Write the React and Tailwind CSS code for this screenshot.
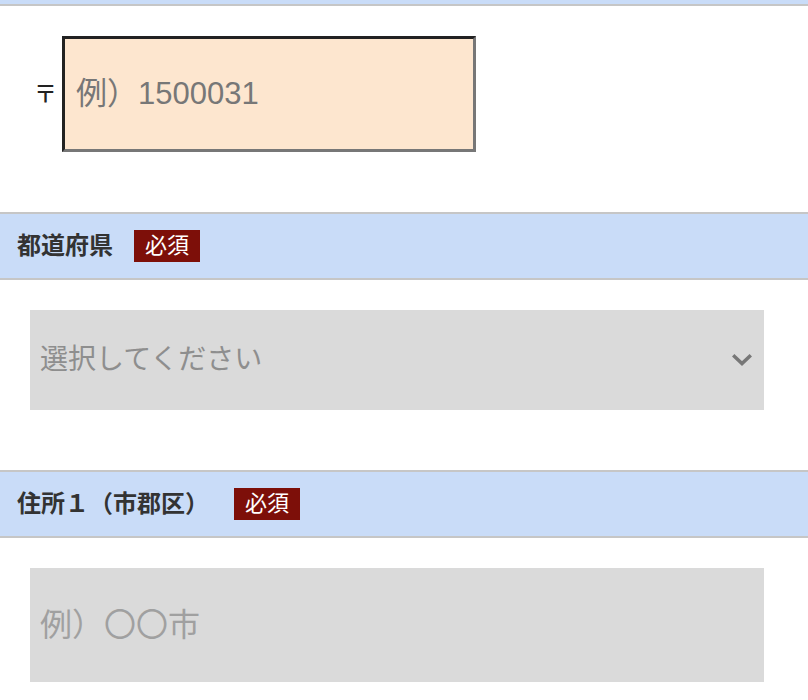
import React from 'react';

const font = { fontFamily: '"Liberation Sans", "Noto Sans CJK JP", sans-serif' };

const SectionHeader = ({ label, gap }) => (
  <div className="flex items-center h-[68px] border-y-2 border-[#c6c6c6] bg-[#c9dcf8] pl-[17px]">
    <span className="text-[24px] font-bold text-[#333]">{label}</span>
    <span className={`${gap} h-[32px] px-[11px] bg-[#7d0f09] text-white text-[22px] leading-[32px]`}>必須</span>
  </div>
);

export default function App() {
  return (
    <div className="w-[808px] bg-white" style={font}>
      {/* bottom edge of the previous header */}
      <div className="h-[6px] bg-[#c9dcf8] border-b-2 border-[#c6c6c6]" />

      <div className="pt-[30px] pb-[60px] pl-[29px] flex items-center">
        <span className="w-[33px] text-center text-[23px] font-medium text-[#222]">〒</span>
        <input
          type="text"
          placeholder="例）1500031"
          className="w-[414px] h-[116px] px-[11px] bg-[#fde6cf] border-[3px] border-t-[#222] border-l-[#222] border-b-[#777] border-r-[#777] text-[31px] placeholder:text-[#777] outline-none"
        />
      </div>

      <SectionHeader label="都道府県" gap="ml-[21px]" />

      <div className="pt-[30px] pb-[60px] pl-[30px]">
        <div className="w-[734px] h-[100px] bg-[#dadada] flex items-center justify-between pl-[10px] pr-[12px]">
          <span className="text-[28px] text-[#8e8e8e]">選択してください</span>
          <svg width="20" height="14" viewBox="0 0 20 14" fill="none">
            <path d="M2.5 3.5 L10 10.5 L17.5 3.5" stroke="#777" strokeWidth="3.5" strokeLinecap="square" />
          </svg>
        </div>
      </div>

      <SectionHeader label="住所１（市郡区）" gap="ml-[25px]" />

      <div className="pt-[30px] pl-[30px] pb-[20px]">
        <input
          type="text"
          placeholder="例）〇〇市"
          className="w-[734px] h-[114px] px-[10px] bg-[#dadada] text-[32px] placeholder:text-[#a0a0a0] outline-none"
        />
      </div>
    </div>
  );
}
